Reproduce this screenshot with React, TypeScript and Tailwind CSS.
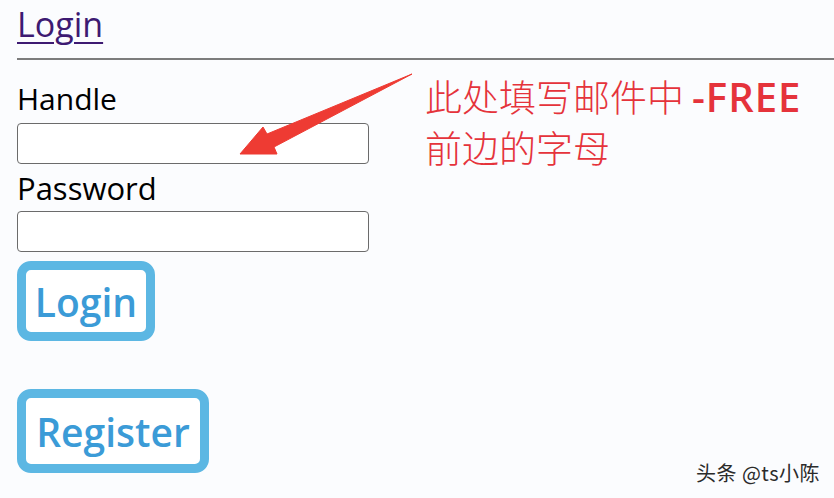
import React from 'react'

const SANS = '"Open Sans", "Noto Sans", "Liberation Sans", sans-serif'
const CJK = '"Noto Sans CJK SC", "Noto Sans", sans-serif'

/** 手書き風の赤い矢印（スクショに後から描き込んだもの） */
function RedArrow() {
  return (
    <svg
      className="pointer-events-none absolute left-0 top-0"
      width={834}
      height={498}
      viewBox="0 0 834 498"
    >
      <polygon
        points="240,154 263,127 267,134 412,74 274,147 277,154"
        fill="#ee3b33"
        stroke="#ee3b33"
        strokeWidth={1}
        strokeLinejoin="round"
      />
    </svg>
  )
}

export default function App() {
  return (
    <div
      className="relative h-[498px] w-[834px] overflow-hidden bg-[#fbfcfe] text-black"
      style={{ fontFamily: SANS }}
    >
      <div className="pl-[17px] pt-[2px]">
        <a href="#" className="text-[34px] leading-[44px] text-[#3d1a72] underline decoration-2 underline-offset-[5px]">
          Login
        </a>
      </div>
      <hr className="ml-[17px] mt-[12px] border-t-2 border-[#7c7c7c]" />

      <div className="flex">
        <div className="flex w-[400px] flex-col pl-[17px]">
          <label className="mt-[19px] text-[30px] leading-[40px]">Handle</label>
          <input className="mt-[4px] h-[41px] w-[352px] rounded-[4px] border border-[#6b6b6b] bg-white" />
          <label className="mt-[4px] text-[31px] leading-[40px]">Password</label>
          <input className="mt-[3px] h-[41px] w-[352px] rounded-[4px] border border-[#6b6b6b] bg-white" />

          <button className="mt-[9px] flex h-[80px] w-[138px] items-center justify-center rounded-[14px] border-[9px] border-[#5cb7e3] bg-white pt-[2px] text-[39px] font-semibold text-[#3b9bd7]">
            Login
          </button>
          <button className="mt-[48px] flex h-[84px] w-[192px] items-center justify-center rounded-[14px] border-[9px] border-[#5cb7e3] bg-white pt-[2px] text-[39px] font-semibold text-[#3b9bd7]">
            Register
          </button>
        </div>

        <div
          className="ml-[25px] mt-[11px] text-[37px] font-light leading-[50px] text-[#e5333b]"
          style={{ fontFamily: CJK }}
        >
          <div className="flex items-baseline">
            此处填写邮件中
            <span style={{ fontFamily: SANS }} className="ml-[8px] text-[40px] font-semibold tracking-[1px]">
              -FREE
            </span>
          </div>
          <div>前边的字母</div>
        </div>
      </div>

      <RedArrow />

      <div
        className="absolute bottom-[13px] right-[14px] text-[20px] leading-[24px] tracking-[0.5px] text-[#2b2b2b] [text-shadow:0_0_2px_#ffffff]"
        style={{ fontFamily: CJK }}
      >
        头条 @ts小陈
      </div>
    </div>
  )
}
